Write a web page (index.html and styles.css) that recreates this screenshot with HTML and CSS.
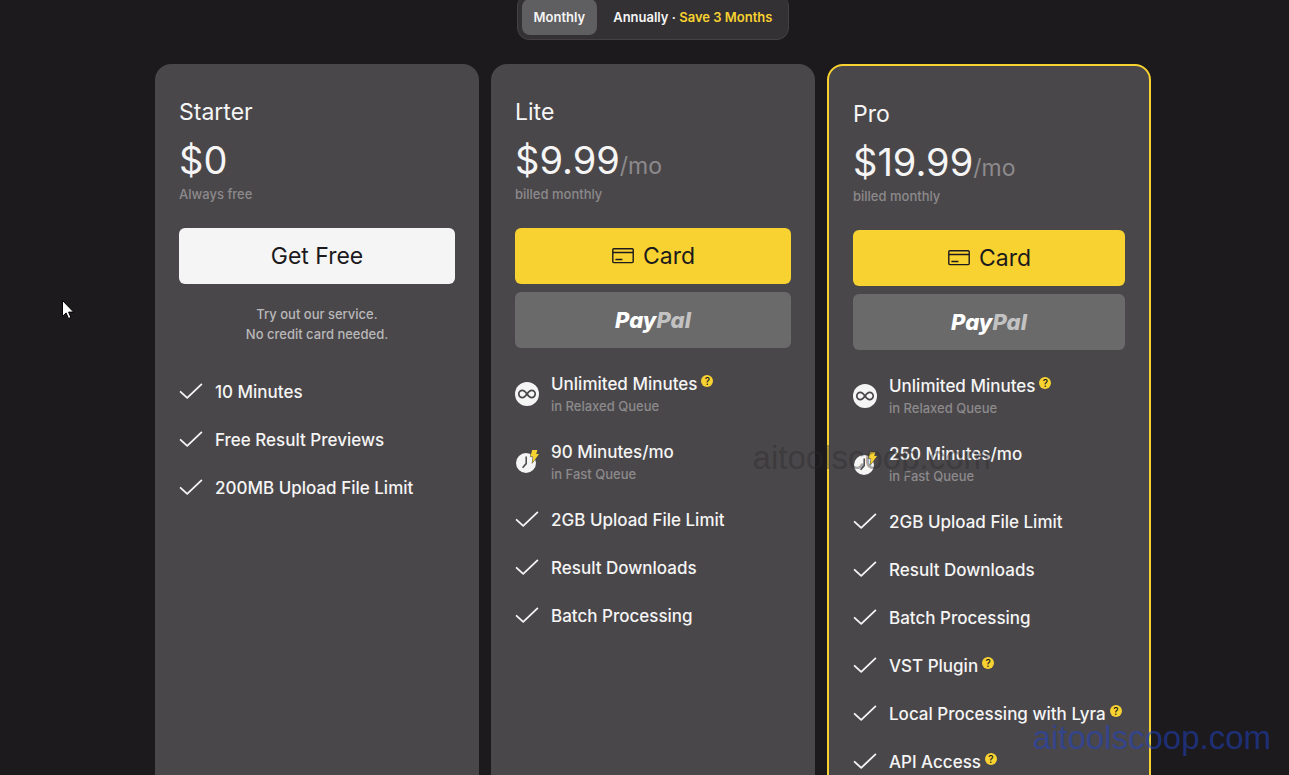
FILE: index.html
```
<!DOCTYPE html>
<html lang="en">

<head>
  <meta charset="UTF-8" />
  <meta name="viewport" content="width=device-width, initial-scale=1" />
  <title>Pricing</title>
  <link rel="stylesheet" href="styles.css">
</head>

<body>
  <!-- shared icons -->
  <svg class="sprite" aria-hidden="true">
    <symbol id="check" viewBox="0 0 24 24">
      <path d="M1.6 11.8 8.2 17.8 22.4 4.4" fill="none" stroke="#f5f5f5" stroke-width="1.8" stroke-linecap="round" stroke-linejoin="round" />
    </symbol>
    <symbol id="infinity" viewBox="0 0 24 24">
      <circle cx="12" cy="12" r="12" fill="#f5f5f5" />
      <path d="M12 12c-1.6-2.3-2.7-3.6-4.6-3.6a3.6 3.6 0 0 0 0 7.2c1.9 0 3-1.3 4.6-3.6 1.6-2.3 2.7-3.6 4.6-3.6a3.6 3.6 0 0 1 0 7.2c-1.9 0-3-1.3-4.6-3.6z" fill="none" stroke="#4a474a" stroke-width="1.7" />
    </symbol>
    <symbol id="fast" viewBox="0 0 24 24">
      <circle cx="11" cy="13" r="10" fill="#f5f5f5" />
      <path d="M11.2 6.4v7.2l-3.6 4.2" fill="none" stroke="#4a474a" stroke-width="1.5" />
      <path d="M17.2 0h5.2l-1.2 4h2.8l-6.8 9.2 1-6.6h-2.8z" fill="#f8d230" stroke="#4a474a" stroke-width="1" paint-order="stroke" />
    </symbol>
    <symbol id="card" viewBox="0 0 24 24">
      <rect x="1.8" y="4.8" width="20.4" height="13.8" rx="1" fill="none" stroke="#1c1a1d" stroke-width="1.4" />
      <path d="M2 8.6h20M4.4 15.4h7" fill="none" stroke="#1c1a1d" stroke-width="1.5" />
    </symbol>
  </svg>

  <main class="pricing">
    <div class="period">
      <button type="button" class="periodOption active" aria-pressed="true">Monthly</button>
      <button type="button" class="periodOption" aria-pressed="false">Annually · <span class="save">Save 3 Months</span></button>
    </div>

    <div class="plans">
      <section class="plan">
        <h2 class="planName">Starter</h2>
        <div class="price">$0</div>
        <div class="billing">Always free</div>
        <div class="actions">
          <button type="button" class="btn btnFree">Get Free</button>
        </div>
        <p class="note">Try out our service.<br>No credit card needed.</p>
        <ul class="features">
          <li class="feature"><svg class="icon"><use href="#check" /></svg><span>10 Minutes</span></li>
          <li class="feature"><svg class="icon"><use href="#check" /></svg><span>Free Result Previews</span></li>
          <li class="feature"><svg class="icon"><use href="#check" /></svg><span>200MB Upload File Limit</span></li>
        </ul>
      </section>

      <section class="plan">
        <h2 class="planName">Lite</h2>
        <div class="price">$9.99<span class="unit">/mo</span></div>
        <div class="billing">billed monthly</div>
        <div class="actions">
          <button type="button" class="btn btnCard"><svg class="icon"><use href="#card" /></svg>Card</button>
          <button type="button" class="btn btnPaypal"><span class="paypal">Pay<span class="pal">Pal</span></span></button>
        </div>
        <ul class="features">
          <li class="feature">
            <svg class="icon"><use href="#infinity" /></svg>
            <div>
              <div class="featureTitle">Unlimited Minutes<button type="button" class="help">?</button></div>
              <div class="queue">in Relaxed Queue</div>
            </div>
          </li>
          <li class="feature">
            <svg class="icon"><use href="#fast" /></svg>
            <div>
              <div class="featureTitle">90 Minutes/mo</div>
              <div class="queue">in Fast Queue</div>
            </div>
          </li>
          <li class="feature"><svg class="icon"><use href="#check" /></svg><span>2GB Upload File Limit</span></li>
          <li class="feature"><svg class="icon"><use href="#check" /></svg><span>Result Downloads</span></li>
          <li class="feature"><svg class="icon"><use href="#check" /></svg><span>Batch Processing</span></li>
        </ul>
      </section>

      <section class="plan planPro">
        <h2 class="planName">Pro</h2>
        <div class="price">$19.99<span class="unit">/mo</span></div>
        <div class="billing">billed monthly</div>
        <div class="actions">
          <button type="button" class="btn btnCard"><svg class="icon"><use href="#card" /></svg>Card</button>
          <button type="button" class="btn btnPaypal"><span class="paypal">Pay<span class="pal">Pal</span></span></button>
        </div>
        <ul class="features">
          <li class="feature">
            <svg class="icon"><use href="#infinity" /></svg>
            <div>
              <div class="featureTitle">Unlimited Minutes<button type="button" class="help">?</button></div>
              <div class="queue">in Relaxed Queue</div>
            </div>
          </li>
          <li class="feature">
            <svg class="icon"><use href="#fast" /></svg>
            <div>
              <div class="featureTitle">250 Minutes/mo</div>
              <div class="queue">in Fast Queue</div>
            </div>
          </li>
          <li class="feature"><svg class="icon"><use href="#check" /></svg><span>2GB Upload File Limit</span></li>
          <li class="feature"><svg class="icon"><use href="#check" /></svg><span>Result Downloads</span></li>
          <li class="feature"><svg class="icon"><use href="#check" /></svg><span>Batch Processing</span></li>
          <li class="feature"><svg class="icon"><use href="#check" /></svg><div class="featureTitle">VST Plugin<button type="button" class="help">?</button></div></li>
          <li class="feature"><svg class="icon"><use href="#check" /></svg><div class="featureTitle">Local Processing with Lyra<button type="button" class="help">?</button></div></li>
          <li class="feature"><svg class="icon"><use href="#check" /></svg><div class="featureTitle">API Access<button type="button" class="help">?</button></div></li>
        </ul>
      </section>
    </div>
  </main>

  <div class="watermark watermarkDark">aitoolscoop.com</div>
  <div class="watermark watermarkBlue">aitoolscoop.com</div>
  <svg class="cursor" viewBox="0 0 12 20" aria-hidden="true">
    <path d="M.5.5v15.8l3.6-3.4 2.4 5.6 2.4-1-2.3-5.4h5z" fill="#fff" stroke="#000" stroke-width="1" />
  </svg>
</body>

</html>
```
FILE: styles.css
```
:root {
  --bg: #1c1a1d;
  --card: #4a474a;
  --white: #f5f5f5;
  --muted: #8c8a8c;
  --yellow: #f8d230;
}

* {
  box-sizing: border-box;
}

body {
  margin: 0;
  height: 100vh;
  overflow: hidden;
  position: relative;
  background: var(--bg);
  color: var(--white);
  font-family: "Inter", "Liberation Sans", sans-serif;
  font-size: 17px;
  line-height: 24px;
}

button {
  border: 0;
  padding: 0;
  font: inherit;
  color: inherit;
  cursor: pointer;
}

.sprite {
  display: none;
}

.pricing {
  display: flex;
  flex-direction: column;
  align-items: center;
  gap: 24px;
  margin-top: -6px;
  padding-left: 17px;
}

.period {
  display: flex;
  gap: 4px;
  padding: 4px;
  border: 1px solid #434144;
  border-radius: 12px;
  background: #333134;
}

.periodOption {
  height: 36px;
  padding: 0 12px;
  border-radius: 8px;
  background: none;
  font-size: 13px;
  font-weight: 600;
}

.periodOption.active {
  background: #5f5e60;
}

.save {
  color: var(--yellow);
}

.plans {
  display: grid;
  grid-template-columns: repeat(3, 1fr);
  gap: 12px;
  width: 100%;
  max-width: 996px;
}

.plan {
  min-height: 100vh;
  padding: 32px 24px;
  border-radius: 16px;
  background: var(--card);
}

.planPro {
  border: 2px solid var(--yellow);
}

.planName {
  margin: 0 0 8px;
  font-size: 23px;
  font-weight: 400;
  line-height: 32px;
}

.price {
  font-size: 38px;
  line-height: 48px;
}

.unit {
  color: var(--muted);
  font-size: 23px;
  line-height: 24px;
}

.billing,
.queue {
  color: var(--muted);
  font-size: 13px;
  font-weight: 500;
  line-height: 20px;
}

.actions {
  display: flex;
  flex-direction: column;
  gap: 8px;
  margin-top: 24px;
}

.btn {
  display: flex;
  align-items: center;
  justify-content: center;
  gap: 8px;
  height: 56px;
  border-radius: 6px;
  color: var(--bg);
  font-size: 23px;
}

.btnFree {
  background: var(--white);
}

.btnCard {
  background: var(--yellow);
}

.btnPaypal {
  background: #6a6a6a;
}

/* single-storey "a" for the wordmark */
.paypal {
  color: #fff;
  font-size: 22px;
  font-weight: 800;
  font-style: italic;
  font-feature-settings: "cv11";
}

.pal {
  color: #c2c2c2;
}

.note {
  margin: 20px 0 36px;
  color: #b9b8b9;
  font-size: 13px;
  font-weight: 500;
  line-height: 20px;
  text-align: center;
}

.features {
  display: flex;
  flex-direction: column;
  gap: 24px;
  margin: 24px 0 0;
  padding: 0;
  list-style: none;
  font-weight: 500;
}

.feature {
  display: flex;
  align-items: center;
  gap: 12px;
  white-space: nowrap;
}

.icon {
  flex: none;
  width: 24px;
  height: 24px;
}

.featureTitle {
  display: flex;
  align-items: flex-start;
  gap: 4px;
}

.help {
  width: 12px;
  height: 12px;
  margin-top: 3px;
  border-radius: 50%;
  background: var(--yellow);
  color: var(--bg);
  font-size: 10px;
  font-weight: 500;
  line-height: 12px;
}

.watermark {
  position: absolute;
  font-family: "Liberation Sans", Arial, sans-serif;
  font-size: 33px;
  line-height: 40px;
  pointer-events: none;
}

.watermarkDark {
  right: 298px;
  top: 438px;
  color: rgba(40, 40, 44, 0.4);
}

.watermarkBlue {
  right: 18px;
  bottom: 17px;
  color: rgba(32, 66, 195, 0.55);
}

.cursor {
  position: absolute;
  left: 62px;
  top: 300px;
  width: 12px;
  height: 20px;
}
```
